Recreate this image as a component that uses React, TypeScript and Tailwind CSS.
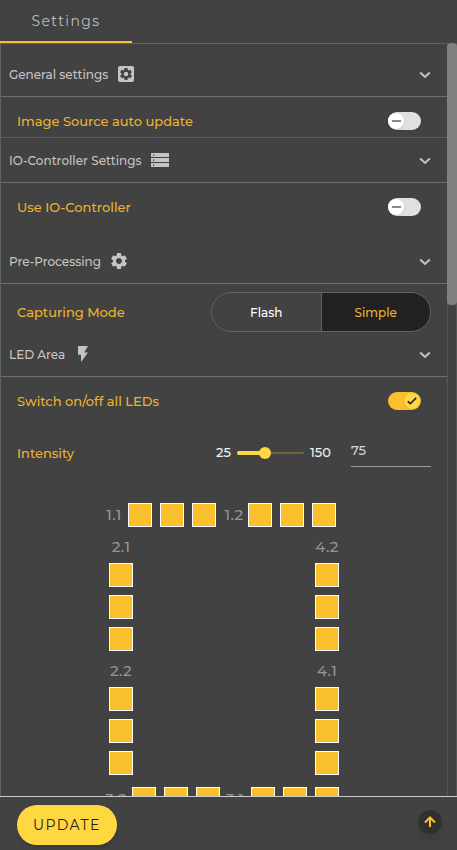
import { useState, type ReactNode } from 'react'
import { MdSettings } from 'react-icons/md'

function ApplicationsIcon() {
  return (
    <svg width="16" height="16" viewBox="0 0 16 16" aria-hidden="true">
      <rect width="16" height="16" rx="2" fill="currentColor" />
      <svg x="0.500" y="0.500" width="15" height="15" viewBox="0 0 24 24" className="text-[#424242]">
        <MdSettings size={24} />
      </svg>
      <circle cx="8" cy="8" r="2" fill="#c4c4c4" />
    </svg>
  )
}

function StorageIcon() {
  return (
    <svg width="18" height="14" viewBox="0 0 18 14" aria-hidden="true">
      <path fill="currentColor" d="M0 0h18v4H0zM0 5h18v4H0zM0 10h18v4H0z" />
      <path fill="#424242" d="M2 1.500h1.300v1.300H2zM2 6.500h1.300v1.300H2zM2 11.500h1.300v1.300H2z" />
    </svg>
  )
}

function FlashIcon() {
  return (
    <svg width="10" height="16" viewBox="0 0 10 16" fill="currentColor" aria-hidden="true">
      <path d="M0 0v8.800h3V16l7-9.600H6.200L10 0z" />
    </svg>
  )
}

function SectionHeader({ title, icon, className }: { title: string; icon: ReactNode; className: string }) {
  return (
    <h2 className="border-b border-[#707070]">
      <button type="button" className={`flex w-full items-center pl-2 pr-4 text-[#c4c4c4] ${className}`}>
        <span className="pt-px text-[12px] leading-5 font-medium">{title}</span>
        <span className="ml-2 flex size-5 items-center justify-center">{icon}</span>
        <svg className="mt-0.5 ml-auto" width="12" height="8" viewBox="0 0 12 8" fill="none" stroke="currentColor" strokeWidth="2" aria-hidden="true">
          <path d="M1.2 1.5 6 6l4.800-4.500" />
        </svg>
      </button>
    </h2>
  )
}

function Toggle({ id, defaultChecked = false }: { id: string; defaultChecked?: boolean }) {
  const [checked, setChecked] = useState(defaultChecked)

  return (
    <span className="relative flex h-[18px] w-[33px]">
      <input
        id={id}
        type="checkbox"
        role="switch"
        checked={checked}
        onChange={(e) => setChecked(e.target.checked)}
        className="h-full w-full cursor-pointer appearance-none rounded-full bg-[#e0e0e0] checked:bg-[#fbc02d]"
      />
      {checked ? (
        <span className="pointer-events-none absolute top-px right-px flex size-4 items-center justify-center rounded-full bg-[#ffd740] shadow">
          <svg width="10" height="8" viewBox="0 0 10 8" fill="none" stroke="#212121" strokeWidth="1.600" aria-hidden="true">
            <path d="M.8 4.300 3.300 6.700 9.200.9" />
          </svg>
        </span>
      ) : (
        <span className="pointer-events-none absolute top-px left-0 flex size-4 items-center justify-center rounded-full bg-white shadow">
          <span className="h-[2px] w-[9px] bg-[#8a8a8a]" />
        </span>
      )}
    </span>
  )
}

function SwitchRow({ id, label, className, defaultChecked }: { id: string; label: string; className: string; defaultChecked?: boolean }) {
  return (
    <div className={`flex items-center justify-between pr-[26px] pl-4 ${className}`}>
      <label htmlFor={id} className="text-[13px] leading-[18px] font-medium text-[#ebb32e]">{label}</label>
      <Toggle id={id} defaultChecked={defaultChecked} />
    </div>
  )
}

function Led({ name }: { name: string }) {
  const [on, setOn] = useState(true)

  return (
    <button
      type="button"
      aria-label={name}
      aria-pressed={on}
      onClick={() => setOn(!on)}
      className={`size-6 shrink-0 border border-white ${on ? 'bg-[#fbc02d]' : 'bg-[#424242]'}`}
    />
  )
}

function LedRow({ name, labelWidth }: { name: string; labelWidth: string }) {
  return (
    <div className="flex items-center gap-2">
      <span className={`-mr-1 flex justify-center text-[15px] leading-6 font-medium tracking-wide text-[#959595] ${labelWidth}`}>{name}</span>
      <Led name={`LED ${name}.1`} />
      <Led name={`LED ${name}.2`} />
      <Led name={`LED ${name}.3`} />
    </div>
  )
}

function LedColumn({ name }: { name: string }) {
  return (
    <div className="flex w-6 flex-col items-center gap-2">
      <span className="-mb-1 text-[15px] leading-6 font-medium tracking-wide text-[#959595]">{name}</span>
      <Led name={`LED ${name}.1`} />
      <Led name={`LED ${name}.2`} />
      <Led name={`LED ${name}.3`} />
    </div>
  )
}

export default function App() {
  const [mode, setMode] = useState('Simple')
  const [intensity, setIntensity] = useState(75)
  const percent = ((intensity - 25) / 125) * 100

  return (
    <div className="flex h-screen flex-col bg-[#424242] font-['Montserrat',sans-serif]">
      <nav className="flex h-[43px] shrink-0">
        <button type="button" className="w-[132px] border-b-2 border-[#fbc02d] pt-0.5 text-[14px] tracking-widest text-[#bdbdbd]">
          Settings
        </button>
      </nav>

      <div className="flex min-h-0 flex-1">
        <main className="min-w-0 flex-1 overflow-hidden border-t border-l border-[#616161]">
          <section className="border-b border-[#5c5c5c]">
            <SectionHeader title="General settings" className="h-[52px] pt-2" icon={<ApplicationsIcon />} />
            <SwitchRow id="auto-update" label="Image Source auto update" className="h-10 pt-2" />
          </section>

          <section>
            <SectionHeader title="IO-Controller Settings" className="h-11" icon={<StorageIcon />} />
            <SwitchRow id="io-controller" label="Use IO-Controller" className="h-12" />
          </section>

          <section>
            <SectionHeader title="Pre-Processing" className="mt-2 h-11" icon={<MdSettings className="shrink-0" size={20} />} />
            <div className="flex items-center justify-between pt-2 pr-4 pl-4">
              <span id="mode-label" className="text-[13px] leading-[18px] font-medium text-[#ebb32e]">Capturing Mode</span>
              <div role="group" aria-labelledby="mode-label" className="flex h-10 w-[220px] overflow-hidden rounded-full border border-[#616161] text-[12px] font-medium">
                <button
                  type="button"
                  aria-pressed={mode === 'Flash'}
                  onClick={() => setMode('Flash')}
                  className={`flex-1 pt-0.5 ${mode === 'Flash' ? 'bg-[#212121] text-[#ebb32e]' : 'text-white'}`}
                >
                  Flash
                </button>
                <button
                  type="button"
                  aria-pressed={mode === 'Simple'}
                  onClick={() => setMode('Simple')}
                  className={`flex-1 border-l border-[#616161] pt-0.5 ${mode === 'Simple' ? 'bg-[#212121] text-[#ebb32e]' : 'text-white'}`}
                >
                  Simple
                </button>
              </div>
            </div>
          </section>

          <section>
            <SectionHeader title="LED Area" className="h-11" icon={<FlashIcon />} />
            <SwitchRow id="all-leds" label="Switch on/off all LEDs" className="h-12" defaultChecked />

            <div className="flex items-center pt-2 pr-4 pl-4">
              <label htmlFor="intensity" className="flex-1 pt-1.5 text-[13px] leading-[18px] font-medium text-[#ebb32e]">Intensity</label>
              <div className="flex items-center gap-[6px] pt-1.5 text-[13px] font-medium text-[#eee]">
                <span>25</span>
                <div className="relative flex h-3 w-[67px] items-center">
                  <span className="h-[2px] w-full rounded-full bg-[#716340]" />
                  <span className="absolute left-0 h-1 rounded-full bg-[#ffd740]" style={{ width: `${percent}%` }} />
                  <input
                    id="intensity"
                    type="range"
                    min={25}
                    max={150}
                    value={intensity}
                    onChange={(e) => setIntensity(Number(e.target.value))}
                    className="absolute inset-0 w-full appearance-none bg-transparent [&::-webkit-slider-thumb]:size-3 [&::-webkit-slider-thumb]:appearance-none [&::-webkit-slider-thumb]:rounded-full [&::-webkit-slider-thumb]:bg-[#ffd740]"
                  />
                </div>
                <span>150</span>
              </div>
              <input
                type="text"
                aria-label="Intensity value"
                value={intensity}
                onChange={(e) => setIntensity(Number(e.target.value) || 25)}
                className="ml-5 h-[34px] w-20 border-b border-[#999] bg-transparent text-[13px] font-medium text-[#d4d4d4]"
              />
            </div>

            <div className="mx-auto mt-9 flex w-[240px] flex-col">
              <div className="flex justify-between pr-2">
                <LedRow name="1.1" labelWidth="w-5" />
                <LedRow name="1.2" labelWidth="w-5" />
              </div>
              <div className="mt-2 flex justify-between px-[5px]">
                <div className="flex flex-col gap-2">
                  <LedColumn name="2.1" />
                  <LedColumn name="2.2" />
                </div>
                <div className="flex flex-col gap-2">
                  <LedColumn name="4.2" />
                  <LedColumn name="4.1" />
                </div>
              </div>
              <div className="mt-3 flex justify-between pr-[5px]">
                <LedRow name="3.2" labelWidth="w-6" />
                <LedRow name="3.1" labelWidth="w-6" />
              </div>
            </div>
          </section>
        </main>

        <div className="w-[10px] border-x border-[#555]" aria-hidden="true">
          <div className="-mx-px h-[262px] rounded-[4px] bg-[#808080]" />
        </div>
      </div>

      <footer className="flex h-[54px] shrink-0 items-center justify-between border-t border-[#ccc] pt-[3px] pr-[15px] pl-[17px]">
        <button type="button" className="h-10 rounded-full bg-[#ffd740] px-4 text-[14px] tracking-widest text-[#212121] shadow-md">
          UPDATE
        </button>
        <button type="button" aria-label="Scroll to top" className="mb-1.5 flex size-6 items-center justify-center rounded-full bg-[#303030] text-[#fbc02d] shadow-lg">
          <svg width="12" height="12" viewBox="0 0 12 12" fill="none" stroke="currentColor" strokeWidth="2" aria-hidden="true">
            <path d="M6 11V2M1 6.500l5-5 5 5" />
          </svg>
        </button>
      </footer>
    </div>
  )
}
